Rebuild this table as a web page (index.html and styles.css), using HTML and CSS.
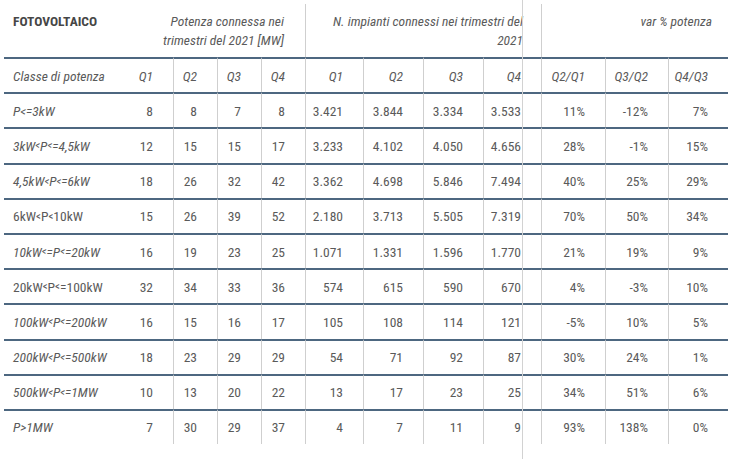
FILE: index.html
```html
<!DOCTYPE html>
<html lang="it">
<head>
<meta charset="utf-8">
<link rel="stylesheet" href="styles.css">
</head>
<body>
<div class="sheet">
  <div class="grid">
    <div class="g g-title">FOTOVOLTAICO</div>
    <div class="g g-pot">Potenza connessa nei<br>trimestri del 2021 [MW]</div>
    <div class="g g-imp">N. impianti connessi nei trimestri del<br>2021</div>
    <div class="g g-var">var % potenza</div>

    <div class="c lab it">Classe di potenza</div>
    <div class="c it nl">Q1</div><div class="c it">Q2</div><div class="c it">Q3</div><div class="c it">Q4</div>
    <div class="c it">Q1</div><div class="c it">Q2</div><div class="c it">Q3</div><div class="c it">Q4</div>
    <div class="c it">Q2/Q1</div><div class="c it">Q3/Q2</div><div class="c it">Q4/Q3</div>

    <div class="c lab it">P&lt;=3kW</div>
    <div class="c nl">8</div><div class="c">8</div><div class="c">7</div><div class="c">8</div>
    <div class="c">3.421</div><div class="c">3.844</div><div class="c">3.334</div><div class="c">3.533</div>
    <div class="c">11%</div><div class="c">-12%</div><div class="c">7%</div>

    <div class="c lab it">3kW<span class="sm">&lt;</span>P<span class="sm">&lt;</span>=4,5kW</div>
    <div class="c nl">12</div><div class="c">15</div><div class="c">15</div><div class="c">17</div>
    <div class="c">3.233</div><div class="c">4.102</div><div class="c">4.050</div><div class="c">4.656</div>
    <div class="c">28%</div><div class="c">-1%</div><div class="c">15%</div>

    <div class="c lab it">4,5kW<span class="sm">&lt;</span>P<span class="sm">&lt;</span>=6kW</div>
    <div class="c nl">18</div><div class="c">26</div><div class="c">32</div><div class="c">42</div>
    <div class="c">3.362</div><div class="c">4.698</div><div class="c">5.846</div><div class="c">7.494</div>
    <div class="c">40%</div><div class="c">25%</div><div class="c">29%</div>

    <div class="c lab">6kW<span class="sm">&lt;</span>P<span class="sm">&lt;</span>10kW</div>
    <div class="c nl">15</div><div class="c">26</div><div class="c">39</div><div class="c">52</div>
    <div class="c">2.180</div><div class="c">3.713</div><div class="c">5.505</div><div class="c">7.319</div>
    <div class="c">70%</div><div class="c">50%</div><div class="c">34%</div>

    <div class="c lab it">10kW<span class="sm">&lt;</span>=P<span class="sm">&lt;</span>=20kW</div>
    <div class="c nl">16</div><div class="c">19</div><div class="c">23</div><div class="c">25</div>
    <div class="c">1.071</div><div class="c">1.331</div><div class="c">1.596</div><div class="c">1.770</div>
    <div class="c">21%</div><div class="c">19%</div><div class="c">9%</div>

    <div class="c lab">20kW<span class="sm">&lt;</span>P<span class="sm">&lt;</span>=100kW</div>
    <div class="c nl">32</div><div class="c">34</div><div class="c">33</div><div class="c">36</div>
    <div class="c">574</div><div class="c">615</div><div class="c">590</div><div class="c">670</div>
    <div class="c">4%</div><div class="c">-3%</div><div class="c">10%</div>

    <div class="c lab it">100kW<span class="sm">&lt;</span>P<span class="sm">&lt;</span>=200kW</div>
    <div class="c nl">16</div><div class="c">15</div><div class="c">16</div><div class="c">17</div>
    <div class="c">105</div><div class="c">108</div><div class="c">114</div><div class="c">121</div>
    <div class="c">-5%</div><div class="c">10%</div><div class="c">5%</div>

    <div class="c lab it">200kW<span class="sm">&lt;</span>P<span class="sm">&lt;</span>=500kW</div>
    <div class="c nl">18</div><div class="c">23</div><div class="c">29</div><div class="c">29</div>
    <div class="c">54</div><div class="c">71</div><div class="c">92</div><div class="c">87</div>
    <div class="c">30%</div><div class="c">24%</div><div class="c">1%</div>

    <div class="c lab it">500kW<span class="sm">&lt;</span>P<span class="sm">&lt;</span>=1MW</div>
    <div class="c nl">10</div><div class="c">13</div><div class="c">20</div><div class="c">22</div>
    <div class="c">13</div><div class="c">17</div><div class="c">23</div><div class="c">25</div>
    <div class="c">34%</div><div class="c">51%</div><div class="c">6%</div>

    <div class="c lab it">P&gt;1MW</div>
    <div class="c nl">7</div><div class="c">30</div><div class="c">29</div><div class="c">37</div>
    <div class="c">4</div><div class="c">7</div><div class="c">11</div><div class="c">9</div>
    <div class="c">93%</div><div class="c">138%</div><div class="c">0%</div>
  </div>
  <div class="stray"></div>
</div>
</body>
</html>
```
FILE: styles.css
```css
html, body {
  margin: 0;
  padding: 0;
  background: #ffffff;
}
body {
  font-family: Roboto, "Roboto Condensed", "Liberation Sans", sans-serif;
  font-stretch: 75%;
  font-size: 13.5px;
  color: #5a5a5a;
}
.sheet {
  position: relative;
  width: 735px;
  height: 459px;
  overflow: hidden;
}
.grid {
  display: grid;
  grid-template-columns: 125px 44px 44px 44px 44px 58px 60px 60px 58px 64px 63px 60px;
  grid-template-rows: 53px repeat(11, 35.2px);
  margin: 4px 0 0 4px;
  width: 724px;
}
.g {
  box-sizing: border-box;
  padding-top: 8px;
  line-height: 19px;
  font-style: italic;
  text-align: right;
  padding-right: 19px;
}
.g-title {
  font-style: normal;
  font-weight: 700;
  color: #464646;
  text-align: left;
  padding-left: 9px;
}
.g-pot { grid-column: 2 / 6; padding-right: 21px; }
.g-imp { grid-column: 6 / 10; border-left: 1px solid #cfcfcf; padding-right: 18px; }
.g-var { grid-column: 10 / 13; border-left: 1px solid #cfcfcf; padding-right: 16px; }
.c {
  box-sizing: border-box;
  display: flex;
  align-items: center;
  justify-content: flex-end;
  padding-right: 20px;
  border-top: 2px solid #4d6780;
  border-left: 1px solid #cfcfcf;
  white-space: nowrap;
}
.c.lab {
  justify-content: flex-start;
  padding-left: 9px;
  padding-right: 0;
  border-left: 0;
}
.c.nl { border-left: 0; }
.it { font-style: italic; }
.sm { font-size: 11px; }
.grid > .c:nth-last-child(-n+12) { }
.stray {
  position: absolute;
  left: 522px;
  top: 0;
  width: 1px;
  height: 459px;
  background: #d2d2d2;
}
```
